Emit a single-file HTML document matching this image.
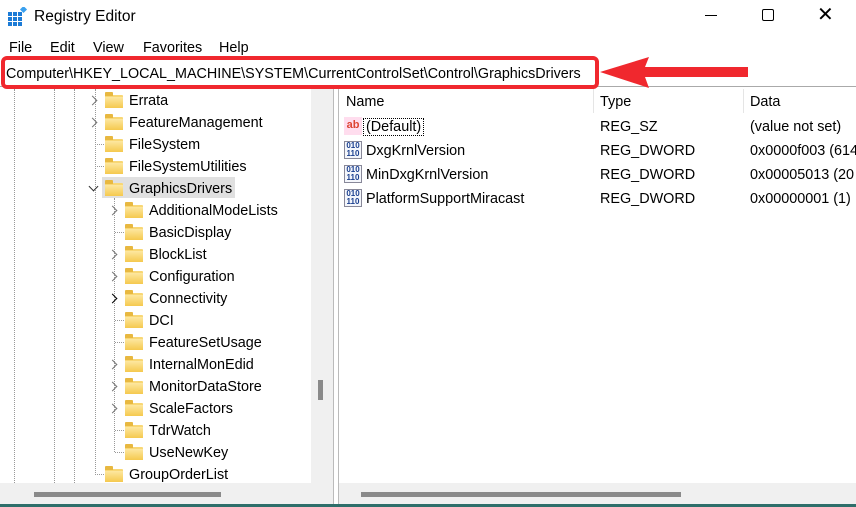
<!DOCTYPE html>
<html><head><style>
*{margin:0;padding:0;box-sizing:border-box}
body{width:856px;height:507px;background:#fff;font-family:"Liberation Sans",sans-serif;font-size:14.4px;color:#000;position:relative;overflow:hidden}
.a{position:absolute;white-space:nowrap}
.fold{position:absolute;width:18px;height:13px;background:#f8d775;border-radius:1px}
.fold:before{content:"";position:absolute;left:0;top:-3px;width:8px;height:4px;background:#e8b840;border-radius:1px 1px 0 0}
.fold:after{content:"";position:absolute;left:0;top:2px;width:18px;height:11px;background:linear-gradient(#fde7a0,#f5c94e)}
.chev{position:absolute;width:7px;height:7px;border-right:1.5px solid #777;border-bottom:1.5px solid #777;transform:rotate(-45deg)}
.vd{position:absolute;border-left:1px dotted #999;width:0}
.hd{position:absolute;border-top:1px dotted #999;height:0}
.ico{position:absolute;width:18px;height:18px;border:1px solid #889;background:#f4f6fb;font-size:8px;line-height:8px;color:#1a3f8f;font-weight:bold;text-align:center}
</style></head><body>
<svg class="a" style="left:8px;top:7px" width="20" height="20"><g fill="#1c7bd6"><rect x="0" y="5" width="4" height="4"/><rect x="5" y="5" width="4" height="4"/><rect x="10" y="5" width="4" height="4"/><rect x="0" y="10" width="4" height="4"/><rect x="5" y="10" width="4" height="4"/><rect x="10" y="10" width="4" height="4"/><rect x="0" y="15" width="4" height="4"/><rect x="5" y="15" width="4" height="4"/><rect x="10" y="15" width="4" height="4"/></g><rect x="13" y="0" width="5" height="5" fill="#3aa0ee" transform="rotate(45 15.5 2.5)"/></svg>
<div class="a" style="left:34px;top:8px;font-size:15.5px">Registry Editor</div>
<div class="a" style="left:705px;top:15px;width:12px;height:1px;background:#000"></div>
<div class="a" style="left:762px;top:9px;width:12px;height:12px;border:1.2px solid #000;border-radius:2px"></div>
<div class="a" style="left:817px;top:2px;font-size:20px;font-weight:200">✕</div>
<div class="a" style="left:9px;top:40px">File</div>
<div class="a" style="left:50px;top:40px">Edit</div>
<div class="a" style="left:93px;top:40px">View</div>
<div class="a" style="left:143px;top:40px">Favorites</div>
<div class="a" style="left:219px;top:40px">Help</div>
<div class="a" style="left:0;top:59px;width:856px;height:28px;border-bottom:1px solid #aaa"></div>
<div class="a" style="left:6px;top:66px;font-size:14.35px">Computer\HKEY_LOCAL_MACHINE\SYSTEM\CurrentControlSet\Control\GraphicsDrivers</div>
<div class="a" style="left:1px;top:56px;width:598px;height:33px;border:4px solid #f0282e;border-radius:6px"></div>
<svg class="a" style="left:598px;top:55px" width="155" height="36"><polygon points="2,17 51,2 47,12 150,12 150,22 47,22 51,33" fill="#f0282e"/></svg>
<div class="a" style="left:0;top:89px;width:311px;height:394px;background:#fff"></div>
<div class="a" style="left:311px;top:89px;width:22px;height:394px;background:#f0f0f0"></div>
<div class="a" style="left:318px;top:380px;width:5px;height:20px;background:#8a8a8a"></div>
<div class="a" style="left:333px;top:89px;width:1px;height:418px;background:#bbb"></div>
<div class="a" style="left:338px;top:89px;width:1px;height:418px;background:#bbb"></div>
<div class="vd" style="left:14px;top:89px;height:394px"></div>
<div class="vd" style="left:54px;top:89px;height:394px"></div>
<div class="vd" style="left:74px;top:89px;height:394px"></div>
<div class="vd" style="left:95px;top:89px;height:384px"></div>
<div class="vd" style="left:114px;top:198px;height:254px"></div>
<div class="a" style="left:102px;top:177px;width:133px;height:21px;background:#e0e0e0"></div>
<div id="tree"></div>
<div class="a" style="left:593px;top:89px;width:1px;height:24px;background:#e5e5e5"></div>
<div class="a" style="left:743px;top:89px;width:1px;height:24px;background:#e5e5e5"></div>
<div class="a" style="left:346px;top:94px">Name</div>
<div class="a" style="left:600px;top:94px">Type</div>
<div class="a" style="left:750px;top:94px">Data</div>
<div class="ico" style="left:344px;top:117px;color:#d43;font-size:11px;line-height:16px;border:none;background:#fde">ab</div>
<div class="a" style="left:363px;top:118px;border:1px dotted #000;padding:0 2px">(Default)</div>
<div class="ico" style="left:344px;top:141px">010<br>110</div>
<div class="ico" style="left:344px;top:165px">010<br>110</div>
<div class="ico" style="left:344px;top:189px">010<br>110</div>
<div class="a" style="left:366px;top:143px">DxgKrnlVersion</div>
<div class="a" style="left:366px;top:167px">MinDxgKrnlVersion</div>
<div class="a" style="left:366px;top:191px">PlatformSupportMiracast</div>
<div class="a" style="left:600px;top:119px">REG_SZ</div>
<div class="a" style="left:600px;top:143px">REG_DWORD</div>
<div class="a" style="left:600px;top:167px">REG_DWORD</div>
<div class="a" style="left:600px;top:191px">REG_DWORD</div>
<div class="a" style="left:750px;top:119px">(value not set)</div>
<div class="a" style="left:750px;top:143px">0x0000f003 (614</div>
<div class="a" style="left:750px;top:167px">0x00005013 (20</div>
<div class="a" style="left:750px;top:191px">0x00000001 (1)</div>
<div class="a" style="left:0;top:483px;width:333px;height:21px;background:#f0f0f0"></div>
<div class="a" style="left:339px;top:483px;width:517px;height:21px;background:#f0f0f0"></div>
<div class="a" style="left:34px;top:492px;width:187px;height:5px;background:#8a8a8a"></div>
<div class="a" style="left:361px;top:492px;width:320px;height:5px;background:#8a8a8a"></div>
<div class="a" style="left:0;top:504px;width:856px;height:3px;background:#2e6e6a"></div>
<script>
var rows=[[2,"Errata",1],[2,"FeatureManagement",1],[2,"FileSystem",0],[2,"FileSystemUtilities",0],[2,"GraphicsDrivers",2],[3,"AdditionalModeLists",1],[3,"BasicDisplay",0],[3,"BlockList",1],[3,"Configuration",1],[3,"Connectivity",3],[3,"DCI",0],[3,"FeatureSetUsage",0],[3,"InternalMonEdid",1],[3,"MonitorDataStore",1],[3,"ScaleFactors",1],[3,"TdrWatch",0],[3,"UseNewKey",0],[2,"GroupOrderList",0]];
var h="";
rows.forEach(function(r,i){var y=89+i*22,fx=r[0]==2?105:125,cx=r[0]==2?89:109;
h+='<div class="fold" style="left:'+fx+'px;top:'+(y+6)+'px"></div>';
h+='<div class="a" style="left:'+(fx+24)+'px;top:'+(y+4)+'px">'+r[1]+'</div>';
if(r[2]==1)h+='<div class="chev" style="left:'+cx+'px;top:'+(y+8)+'px"></div>';
else if(r[2]==3)h+='<div class="chev" style="left:'+cx+'px;top:'+(y+8)+'px;border-color:#000"></div>';
else if(r[2]==2)h+='<div class="chev" style="left:'+(cx+1)+'px;top:'+(y+6)+'px;transform:rotate(45deg);border-color:#333"></div>';
else h+='<div class="hd" style="left:'+(cx+6)+'px;top:'+(y+11)+'px;width:'+(fx-cx-7)+'px"></div>';});
document.getElementById("tree").innerHTML=h;
</script>
</body></html>
